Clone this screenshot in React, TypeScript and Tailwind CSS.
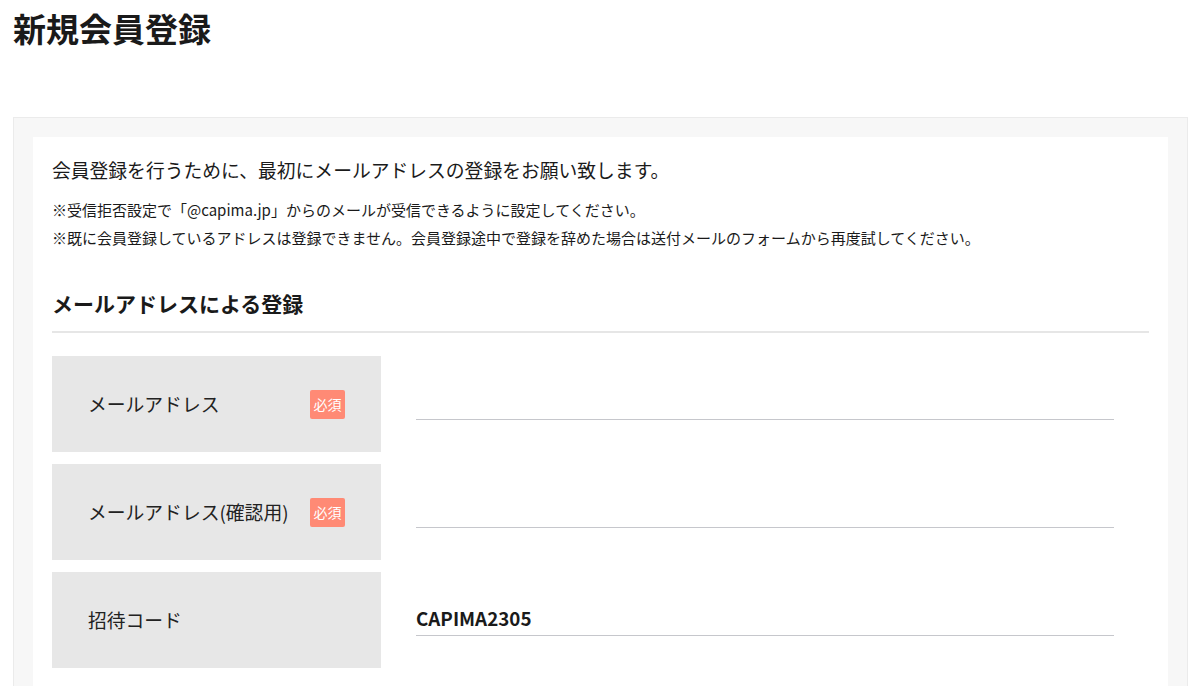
import React from "react";

const fields = [
  { label: "メールアドレス", required: true, value: "" },
  { label: "メールアドレス(確認用)", required: true, value: "" },
  { label: "招待コード", required: false, value: "CAPIMA2305" },
];

export default function App() {
  return (
    <div
      className="w-[1200px] h-[686px] overflow-hidden bg-white text-[#1a1a1a]"
      style={{ fontFamily: '"Noto Sans CJK JP", "Noto Sans", sans-serif' }}
    >
      <h1 className="pl-[13px] text-[33px] font-bold leading-[56px]">新規会員登録</h1>

      <div className="mt-[61px] ml-[13px] mr-[12px] border border-[#ebebeb] bg-[#f7f7f7] px-[19px] pt-[19px]">
        <div className="bg-white px-[19px] pt-[18px] pb-10">
          <p className="text-[18.8px] leading-[30px]">
            会員登録を行うために、最初にメールアドレスの登録をお願い致します。
          </p>
          <div className="mt-[11px] text-[15px] leading-[28px]">
            <p>※受信拒否設定で「@capima.jp」からのメールが受信できるように設定してください。</p>
            <p>
              ※既に会員登録しているアドレスは登録できません。会員登録途中で登録を辞めた場合は送付メールのフォームから再度試してください。
            </p>
          </div>

          <h2 className="mt-[36px] pb-[13px] border-b-2 border-[#e6e6e6] text-[21px] font-bold leading-[30px]">
            メールアドレスによる登録
          </h2>

          <div className="mt-[23px] flex flex-col gap-3">
            {fields.map((f) => (
              <div key={f.label} className="flex h-[96px]">
                <div className="w-[329px] shrink-0 bg-[#e7e7e7] pl-[36px] pr-[36px] flex items-center justify-between">
                  <span className="text-[18.8px] text-[#222]">{f.label}</span>
                  {f.required && (
                    <span className="w-[35px] h-[29px] rounded-[2px] bg-[#ff8a75] text-white text-[14px] flex items-center justify-center">
                      必須
                    </span>
                  )}
                </div>
                <div className="flex-1 px-[35px] flex items-end pb-[32px]">
                  <div className="w-full border-b border-[#c6c7cc] h-[34px] flex items-center text-[18.8px] font-bold leading-none">
                    {f.value}
                  </div>
                </div>
              </div>
            ))}
          </div>
        </div>
      </div>
    </div>
  );
}
